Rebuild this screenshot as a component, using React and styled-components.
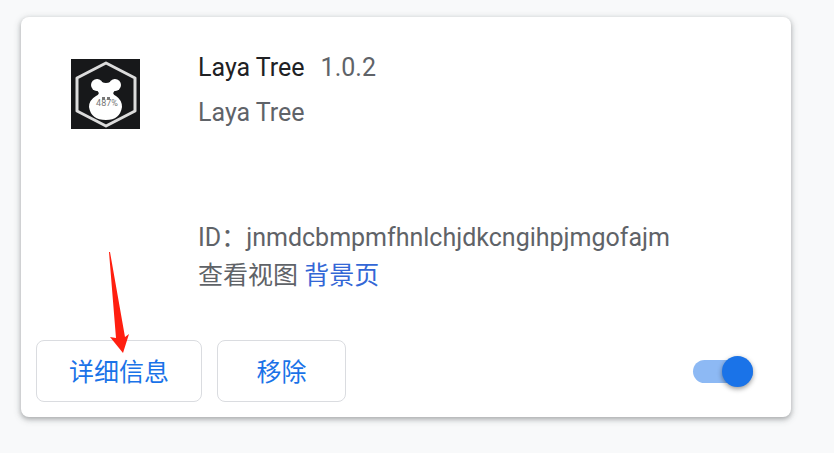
import React, { useState } from "react";
import styled, { createGlobalStyle } from "styled-components";

const GlobalStyle = createGlobalStyle`
  body {
    margin: 0;
    background: #f8f9fa;
    font-family: Roboto, "Noto Sans CJK SC", sans-serif;
    font-size: 25px;
    line-height: 38px;
    color: #5f6368;
  }
`;

const Page = styled.main`
  padding: 17px 43px 36px 21px;
`;

const Card = styled.article`
  display: flex;
  flex-direction: column;
  gap: 45px;
  box-sizing: border-box;
  padding: 32px 15px 15px;
  border-radius: 8px;
  background: #fff;
  box-shadow: 0 2px 4px rgba(60, 64, 67, 0.3), 0 2px 6px 2px rgba(60, 64, 67, 0.15);
`;

const Summary = styled.div`
  display: flex;
  align-items: flex-start;
  gap: 58px;
  padding-left: 35px;
`;

const Logo = styled.svg`
  flex: none;
  width: 69px;
  height: 70px;
  margin-top: 10px;
`;

const Details = styled.div`
  flex: 1;
  min-width: 0;
`;

const Heading = styled.header`
  display: flex;
  gap: 16px;
  margin-bottom: 7px;
`;

const Name = styled.h2`
  margin: 0;
  font-size: inherit;
  font-weight: 400;
  color: #202124;
`;

const Line = styled.p`
  margin: 0;
  overflow-wrap: anywhere;
`;

const Description = styled(Line)`
  min-height: 125px;
`;

const ViewLink = styled.a`
  color: #3367d6;
  text-decoration: none;
`;

const Actions = styled.footer`
  display: flex;
  align-items: center;
  gap: 15px;
`;

const ActionButton = styled.button`
  position: relative;
  min-width: 129px;
  height: 62px;
  padding: 3px 32px 0;
  border: 1px solid #dadce0;
  border-radius: 8px;
  background: #fff;
  color: #1a73e8;
  font: inherit;
  cursor: pointer;
`;

const Pointer = styled.svg`
  position: absolute;
  left: 70px;
  bottom: 47px;
  width: 24px;
  height: 104px;
  pointer-events: none;
`;

const Switch = styled.input`
  appearance: none;
  display: flex;
  align-items: center;
  justify-content: flex-end;
  width: 60px;
  height: 23px;
  margin: 0 23px 0 auto;
  border-radius: 12px;
  background: #bdc1c6;
  cursor: pointer;

  &::before {
    content: "";
    width: 31px;
    height: 31px;
    border-radius: 50%;
    background: #fff;
    box-shadow: 0 2px 5px rgba(0, 0, 0, 0.4);
    margin-right: auto;
  }

  &:checked {
    background: #8db9f4;
  }

  &:checked::before {
    background: #1a73e8;
    margin-right: 0;
  }
`;

function LayaLogo() {
  return (
    <Logo viewBox="0 0 69 70" aria-hidden="true">
      <rect width="69" height="70" fill="#17181a" />
      <path d="M35 4 L64 19 V52 L35 67 L6 52 V19 Z" fill="none" stroke="#dcdcdc" strokeWidth="3" strokeLinejoin="round" />
      <g fill="#fff">
        <circle cx="26" cy="26" r="6" />
        <circle cx="44" cy="26" r="6" />
        <path d="M26 20 Q31 24 35 24 Q39 24 44 20 L47 31 Q42 31 42 36 H28 Q28 31 23 31 Z" />
        <path d="M28 32 H42 Q41 35 45 37 Q51 41 51 48 Q49 61 35 61 Q20 61 18 48 Q18 41 25 37 Q29 35 28 32 Z" />
      </g>
      <path d="M31 38 h3 v3 h-3 Z M36 38 h3 v3 h-3 Z" fill="#777" />
      <text x="36" y="47" textAnchor="middle" fontSize="9" fill="#777">487%</text>
    </Logo>
  );
}

export default function App() {
  const [enabled, setEnabled] = useState(true);

  return (
    <>
      <GlobalStyle />
      <Page>
        <Card lang="zh-CN">
          <Summary>
            <LayaLogo />
            <Details>
              <Heading>
                <Name>Laya Tree</Name>
                <span>1.0.2</span>
              </Heading>
              <Description>Laya Tree</Description>
              <Line>ID：jnmdcbmpmfhnlchjdkcngihpjmgofajm</Line>
              <Line>
                查看视图 <ViewLink href="#background">背景页</ViewLink>
              </Line>
            </Details>
          </Summary>
          <Actions>
            <ActionButton type="button">
              详细信息
              <Pointer viewBox="0 0 24 104" aria-hidden="true">
                <path d="M2 2 H3 L18 87 L22 84 L16 103 L3 87 L9 88 Z" fill="#ff1f10" />
              </Pointer>
            </ActionButton>
            <ActionButton type="button">移除</ActionButton>
            <Switch
              type="checkbox"
              role="switch"
              aria-label="Laya Tree"
              checked={enabled}
              onChange={(event) => setEnabled(event.target.checked)}
            />
          </Actions>
        </Card>
      </Page>
    </>
  );
}
